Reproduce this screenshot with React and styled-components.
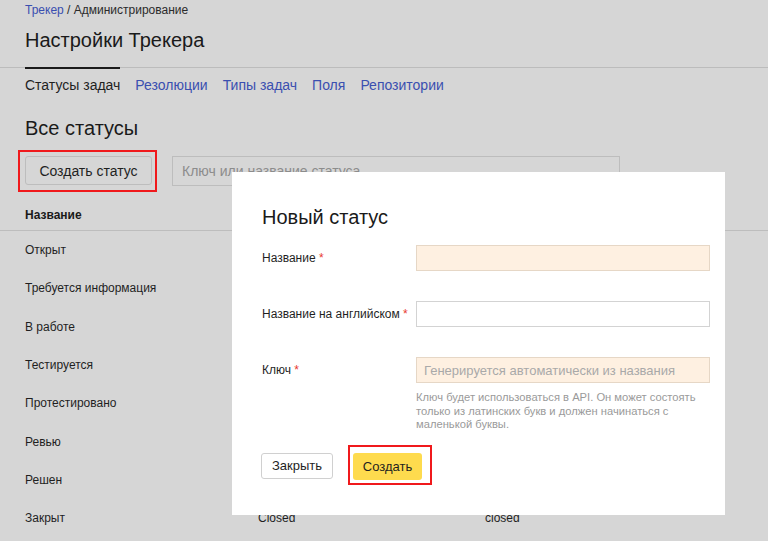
import React from 'react';
import styled, { createGlobalStyle } from 'styled-components';

const GlobalStyle = createGlobalStyle`
  html, body {
    margin: 0;
    padding: 0;
    background: #d6d6d6;
  }
  body {
    font-family: "Liberation Sans", Arial, sans-serif;
    color: #1c1c1c;
  }
`;

const Page = styled.div`
  position: relative;
  width: 768px;
  height: 541px;
  overflow: hidden;
  background: #d6d6d6;
`;

const Header = styled.div`
  padding: 2px 25px 0;
`;

const Breadcrumbs = styled.div`
  font-size: 12px;
  line-height: 16px;
  color: #2b2b2b;
`;

const Link = styled.span`
  color: #3a4fb0;
`;

const Title = styled.h1`
  margin: ${(p) => p.$mt || 0}px 0 0;
  font-size: 20px;
  line-height: 24px;
  font-weight: normal;
  color: #1a1a1a;
`;

const Tabs = styled.div`
  margin-top: 15px;
  border-top: 1px solid #bcbcbc;
  display: flex;
  gap: 15px;
  padding: 0 25px;
`;

const Tab = styled.div`
  font-size: 14px;
  line-height: 16px;
  padding-top: 8px;
  margin-top: -1px;
  border-top: 2px solid ${(p) => (p.$active ? '#1a1a1a' : 'transparent')};
  color: ${(p) => (p.$active ? '#1f1f1f' : '#3a4fb0')};
`;

const Section = styled.div`
  padding: 0 25px;
  margin-top: 23px;
`;

const Toolbar = styled.div`
  display: flex;
  align-items: flex-start;
  margin-top: 10px;
  margin-left: -7px;
`;

const Highlight = styled.div`
  border: 2px solid #f0191c;
  padding: ${(p) => p.$pad};
  display: inline-flex;
`;

const GrayButton = styled.div`
  width: 127px;
  height: 29px;
  box-sizing: border-box;
  border: 1px solid #bdbdbd;
  border-radius: 3px;
  font-size: 14px;
  display: flex;
  align-items: center;
  justify-content: center;
  color: #1f1f1f;
`;

const Search = styled.div`
  margin-left: 15px;
  margin-top: 6px;
  width: 448px;
  height: 30px;
  box-sizing: border-box;
  border: 1px solid #bdbdbd;
  font-size: 14px;
  color: #8c8c8c;
  padding-left: 9px;
  display: flex;
  align-items: center;
`;

const Table = styled.div`
  margin-top: 15px;
`;

const HeadRow = styled.div`
  padding: 0 25px 7px;
  border-bottom: 1px solid #bdbdbd;
  font-size: 12px;
  line-height: 16px;
  font-weight: bold;
  color: #1a1a1a;
`;

const Row = styled.div`
  display: grid;
  grid-template-columns: 233px 227px 1fr;
  padding: 0 25px;
  height: 38.3px;
  align-items: center;
  font-size: 12px;
  color: #1f1f1f;
`;

const Modal = styled.div`
  position: absolute;
  left: 232px;
  top: 172px;
  width: 493px;
  height: 343px;
  box-sizing: border-box;
  background: #fff;
  padding: 33px 15px 0 30px;
`;

const FormRow = styled.div`
  display: grid;
  grid-template-columns: 154px 294px;
  margin-top: ${(p) => p.$mt}px;
`;

const Label = styled.div`
  font-size: 12px;
  line-height: 16px;
  padding-top: 5px;
  color: #1f1f1f;
`;

const Req = styled.span`
  color: #e8392f;
`;

const Field = styled.div`
  height: 26px;
  box-sizing: border-box;
  border: 1px solid ${(p) => (p.$tinted ? '#e6d7c6' : '#d3d3d3')};
  background: ${(p) => (p.$tinted ? '#fef0e1' : '#fff')};
  font-size: 13px;
  color: #a9a9a9;
  padding-left: 7px;
  display: flex;
  align-items: center;
`;

const Hint = styled.div`
  margin-top: 8px;
  font-size: 11.2px;
  line-height: 13.5px;
  color: #9a9a9a;
`;

const Actions = styled.div`
  display: flex;
  align-items: flex-start;
  margin-top: 13px;
  margin-left: -1px;
`;

const CloseButton = styled.div`
  width: 72px;
  height: 26px;
  margin-top: 8px;
  margin-right: 15px;
  box-sizing: border-box;
  border: 1px solid #d0d0d0;
  border-radius: 3px;
  font-size: 13px;
  display: flex;
  align-items: center;
  justify-content: center;
  color: #1f1f1f;
`;

const PrimaryButton = styled.div`
  width: 69px;
  height: 27px;
  border-radius: 3px;
  background: #fedb4e;
  font-size: 13px;
  display: flex;
  align-items: center;
  justify-content: center;
  color: #1f1f1f;
`;

// only the last row's english name and key show below the dialog
const statuses = [
  ['Открыт', '', '', 'open'],
  ['Требуется информация', '', '', 'needInfo'],
  ['В работе', '', '', 'inProgress'],
  ['Тестируется', '', '', 'testing'],
  ['Протестировано', '', '', 'tested'],
  ['Ревью', '', '', 'inReview'],
  ['Решен', '', '', 'resolved'],
  ['Закрыт', 'Closed', 'closed', 'closed'],
];

export default function App() {
  return (
    <Page>
      <GlobalStyle />
      <Header>
        <Breadcrumbs>
          <Link>Трекер</Link> / Администрирование
        </Breadcrumbs>
        <Title $mt={10}>Настройки Трекера</Title>
      </Header>
      <Tabs>
        <Tab $active>Статусы задач</Tab>
        <Tab>Резолюции</Tab>
        <Tab>Типы задач</Tab>
        <Tab>Поля</Tab>
        <Tab>Репозитории</Tab>
      </Tabs>
      <Section>
        <Title>Все статусы</Title>
        <Toolbar>
          <Highlight $pad="4px 3px 5px 5px">
            <GrayButton>Создать статус</GrayButton>
          </Highlight>
          <Search>Ключ или название статуса</Search>
        </Toolbar>
      </Section>
      <Table>
        <HeadRow>Название</HeadRow>
        {statuses.map(([name, en, key, id]) => (
          <Row key={id}>
            <span>{name}</span>
            <span>{en}</span>
            <span>{key}</span>
          </Row>
        ))}
      </Table>
      <Modal>
        <Title>Новый статус</Title>
        <FormRow $mt={16}>
          <Label>
            Название <Req>*</Req>
          </Label>
          <Field $tinted />
        </FormRow>
        <FormRow $mt={30}>
          <Label>
            Название на английском <Req>*</Req>
          </Label>
          <Field />
        </FormRow>
        <FormRow $mt={30}>
          <Label>
            Ключ <Req>*</Req>
          </Label>
          <div>
            <Field $tinted>Генерируется автоматически из названия</Field>
            <Hint>
              Ключ будет использоваться в API. Он может состоять
              <br />
              только из латинских букв и должен начинаться с
              <br />
              маленькой буквы.
            </Hint>
          </div>
        </FormRow>
        <Actions>
          <CloseButton>Закрыть</CloseButton>
          <Highlight $pad="6px 8px 3px 3px">
            <PrimaryButton>Создать</PrimaryButton>
          </Highlight>
        </Actions>
      </Modal>
    </Page>
  );
}
